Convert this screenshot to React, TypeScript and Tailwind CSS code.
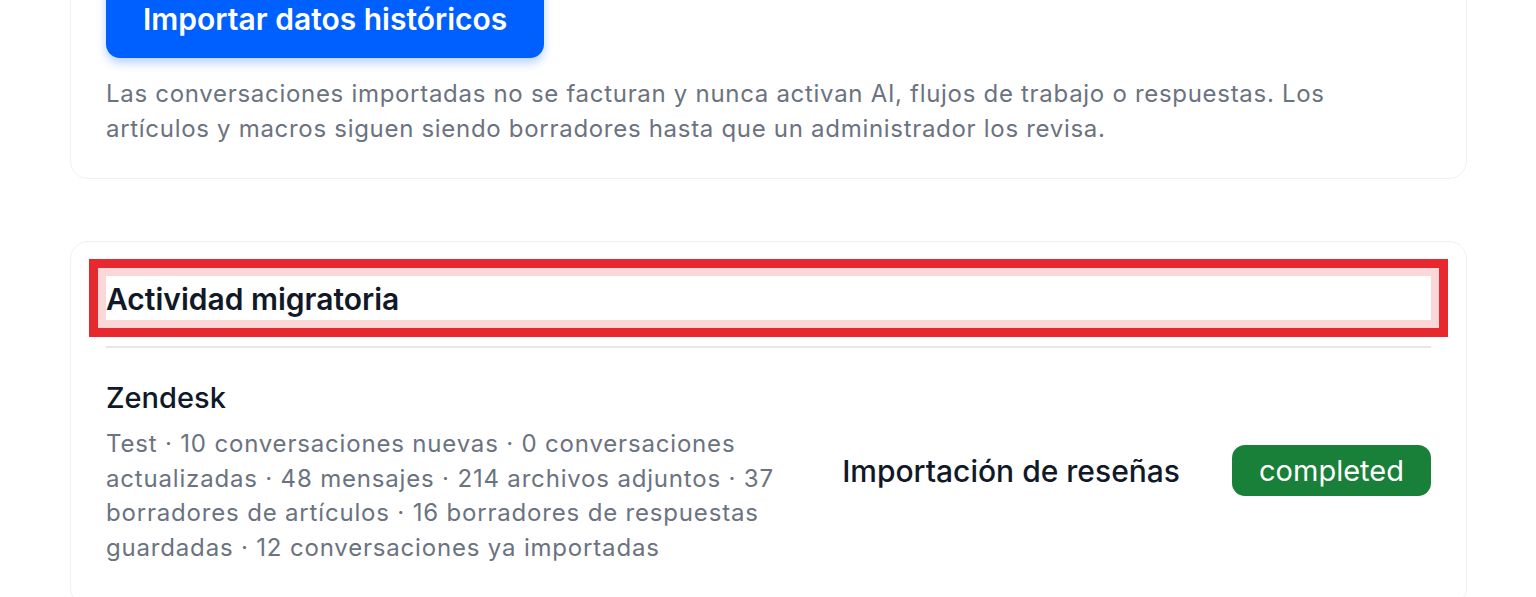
import React from "react";

export default function App() {
  return (
    <div
      className="min-h-screen bg-white pl-[70px] pr-[69px] overflow-hidden"
      style={{ fontFamily: "Inter, 'Noto Sans', sans-serif" }}
    >
      <div className="-mt-[56px] rounded-[18px] border border-[#eef0f3] bg-white px-[35px] pt-[35px] pb-[32px]">
        <button className="h-[78px] rounded-[14px] bg-[#0060ff] px-[37px] text-[30px] font-semibold leading-[38px] text-white shadow-[0_5px_10px_rgba(0,96,255,0.28)]">
          Importar datos históricos
        </button>
        <p className="mt-[18px] text-[24px] leading-[35px] tracking-[0.7px] text-[#6b7280]">
          Las conversaciones importadas no se facturan y nunca activan AI, flujos de trabajo o respuestas. Los
          <br />
          artículos y macros siguen siendo borradores hasta que un administrador los revisa.
        </p>
      </div>

      <div className="mt-[62px] rounded-[18px] border border-[#eef0f3] bg-white px-[35px] pt-[34px] pb-[40px]">
        <div className="relative">
          <h2 className="pt-[2px] text-[30px] font-semibold leading-[42px] text-[#111827]">Actividad migratoria</h2>
          <div className="pointer-events-none absolute -inset-[17px] border-[9px] border-[#e8282f]">
            <div className="h-full w-full border-[8px] border-[#fbd7d7]" />
          </div>
        </div>
        <div className="mt-[26px] h-[2px] bg-[#e5e7eb]" />
        <div className="flex items-center justify-between gap-[48px] pt-[32px]">
          <div className="flex-1">
            <div className="text-[29px] font-medium leading-[36px] text-[#111827]">Zendesk</div>
            <div className="mt-[11px] text-[24px] leading-[34.5px] tracking-[0.82px] text-[#6b7280]">
              Test · 10 conversaciones nuevas · 0 conversaciones actualizadas · 48 mensajes · 214 archivos adjuntos · 37
              borradores de artículos · 16 borradores de respuestas guardadas · 12 conversaciones ya importadas
            </div>
          </div>
          <div className="flex items-center gap-[52px]">
            <span className="pb-[3px] text-[30px] font-medium text-[#111827]">Importación de reseñas</span>
            <span className="mb-[4px] flex h-[51px] w-[199px] items-center justify-center rounded-[13px] bg-[#188038] text-[29px] text-white">
              completed
            </span>
          </div>
        </div>
      </div>
    </div>
  );
}
